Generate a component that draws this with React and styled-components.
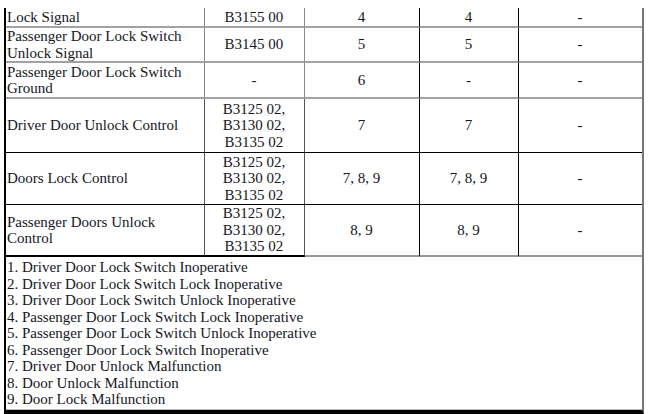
import React from "react";
import styled, { createGlobalStyle } from "styled-components";

const Global = createGlobalStyle`
  html, body { margin: 0; padding: 0; background: #fff; }
  body { font-family: "Liberation Serif", "Times New Roman", serif; color: #161624; }
`;

const Frame = styled.div`
  margin: 8px 0 0 4px;
  width: 640px;
  box-sizing: border-box;
  border-left: 2px solid #000;
  border-right: 2px solid #777;
  border-bottom: 4px solid #000;
  display: grid;
  grid-template-columns: 199px 100px 115px 99px 1fr;
`;

const Cell = styled.div`
  box-sizing: border-box;
  height: ${(p) => p.$h}px;
  display: flex;
  align-items: center;
  justify-content: ${(p) => (p.$left ? "flex-start" : "center")};
  text-align: ${(p) => (p.$left ? "left" : "center")};
  padding: 0 2px 0 1px;
  font-size: 15px;
  line-height: 16.5px;
  border-right: ${(p) => (p.$last ? "none" : `1px solid ${p.$vc}`)};
  border-bottom: ${(p) => p.$bw}px solid ${(p) => p.$bc};
`;

const Notes = styled.div`
  grid-column: 1 / -1;
  box-sizing: border-box;
  height: 153px;
  padding: 2px 2px 0 1px;
  font-size: 15px;
  line-height: 16.5px;
  border-bottom: 1px solid #bbb;
`;

const NoteLine = styled.div`
  white-space: nowrap;
`;

const GRAY = "#a2a2a2";
const BLACK = "#000";

const rows = [
  { h: 20, cells: ["Lock Signal", "B3155 00", "4", "4", "-"], bc: [GRAY, GRAY, GRAY, GRAY, GRAY], bw: 2, gray: true },
  { h: 35, cells: [["Passenger Door Lock Switch", "Unlock Signal"], "B3145 00", "5", "5", "-"], bc: [GRAY, GRAY, GRAY, GRAY, GRAY], bw: 2, gray: true },
  { h: 36, cells: [["Passenger Door Lock Switch", "Ground"], "-", "6", "-", "-"], bc: [GRAY, GRAY, GRAY, GRAY, GRAY], bw: 2, gray: true },
  { h: 54, cells: ["Driver Door Unlock Control", ["B3125 02,", "B3130 02,", "B3135 02"], "7", "7", "-"], bc: [BLACK, BLACK, BLACK, BLACK, BLACK], bw: 1 },
  { h: 52, cells: ["Doors Lock Control", ["B3125 02,", "B3130 02,", "B3135 02"], "7, 8, 9", "7, 8, 9", "-"], bc: [BLACK, BLACK, BLACK, BLACK, BLACK], bw: 1 },
  { h: 52, cells: [["Passenger Doors Unlock", "Control"], ["B3125 02,", "B3130 02,", "B3135 02"], "8, 9", "8, 9", "-"], bc: [BLACK, BLACK, "#999", "#999", "#999"], bw: 2 },
];

const notes = [
  "1. Driver Door Lock Switch Inoperative",
  "2. Driver Door Lock Switch Lock Inoperative",
  "3. Driver Door Lock Switch Unlock Inoperative",
  "4. Passenger Door Lock Switch Lock Inoperative",
  "5. Passenger Door Lock Switch Unlock Inoperative",
  "6. Passenger Door Lock Switch Inoperative",
  "7. Driver Door Unlock Malfunction",
  "8. Door Unlock Malfunction",
  "9. Door Lock Malfunction",
];

const vColors = (gray) => [gray ? "#8a8a8a" : "#555", gray ? "#8a8a8a" : "#555", BLACK, BLACK, BLACK];

const Content = ({ v }) =>
  Array.isArray(v) ? (
    <div>
      {v.map((l, i) => (
        <div key={i}>{l}</div>
      ))}
    </div>
  ) : (
    v
  );

export default function App() {
  return (
    <>
      <Global />
      <Frame>
        {rows.map((r, ri) =>
          r.cells.map((c, ci) => (
            <Cell
              key={`${ri}-${ci}`}
              $h={r.h}
              $left={ci === 0}
              $last={ci === 4}
              $vc={vColors(r.gray)[ci]}
              $bc={r.bc[ci]}
              $bw={r.bw}
            >
              <Content v={c} />
            </Cell>
          ))
        )}
        <Notes>
          {notes.map((n) => (
            <NoteLine key={n}>{n}</NoteLine>
          ))}
        </Notes>
      </Frame>
    </>
  );
}
